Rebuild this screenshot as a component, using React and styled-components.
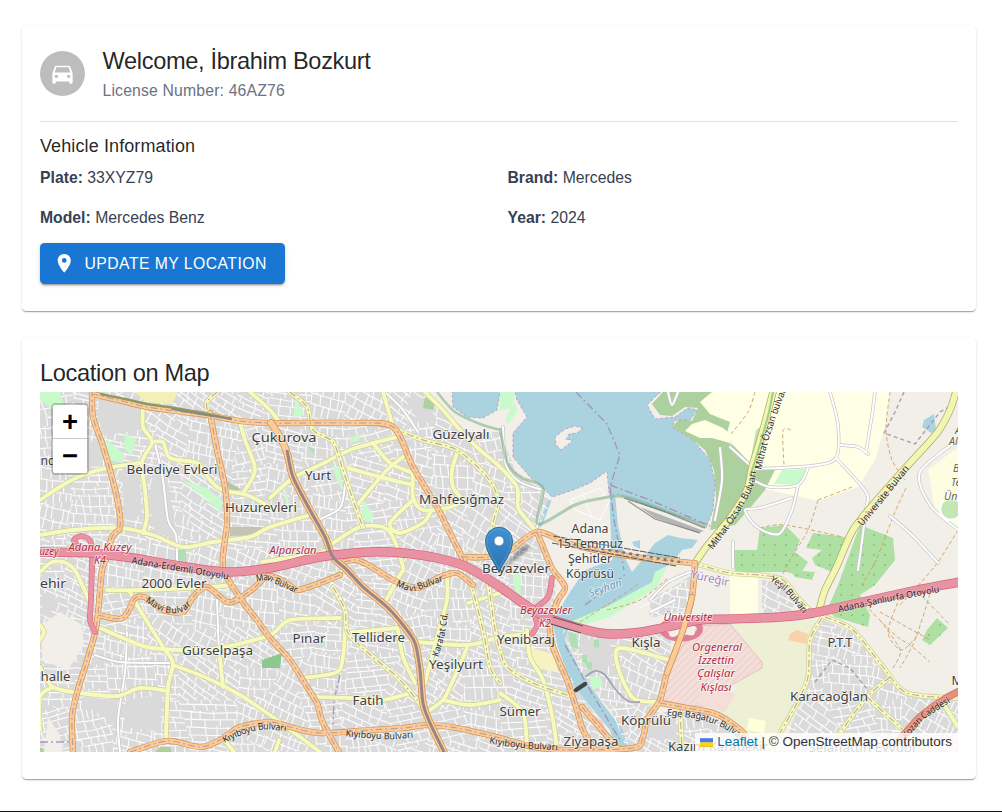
import React from "react";
import styled, { createGlobalStyle } from "styled-components";
import { MdDirectionsCar, MdLocationOn } from "react-icons/md";

const GlobalStyle = createGlobalStyle`
  * { box-sizing: border-box; }
  body {
    margin: 0;
    background: #fff;
    color: rgba(0, 0, 0, 0.87);
    font-family: "Liberation Sans", Arial, sans-serif;
  }
`;

const Page = styled.main`
  height: 812px;
  padding: 26px 26px 0 22px;
  border-bottom: 1px solid #141414;
  display: flex;
  flex-direction: column;
  gap: 27px;
`;

const Card = styled.section`
  width: 954px;
  padding: 18px 18px 27px;
  border-radius: 4.5px;
  background: #fff;
  box-shadow: 0 2px 1px -1px rgba(0, 0, 0, 0.2), 0 1px 1px 0 rgba(0, 0, 0, 0.14),
    0 1px 3px 0 rgba(0, 0, 0, 0.12);
`;

const Header = styled.header`
  display: flex;
  align-items: center;
  gap: 17.5px;
  padding-bottom: 18px;
  border-bottom: 1px solid rgba(0, 0, 0, 0.12);
`;

const Avatar = styled.div`
  width: 45px;
  height: 45px;
  border-radius: 50%;
  background: #bdbdbd;
  color: #fff;
  display: grid;
  place-items: center;
  font-size: 27px;
  line-height: 0;
`;

const Title = styled.h1`
  margin: 0;
  padding-bottom: 2px;
  font-size: 23.6px;
  line-height: 34px;
  font-weight: 400;
  letter-spacing: -0.34px;
  white-space: nowrap;
`;

const Muted = styled.p`
  margin: 0;
  font-size: 15.75px;
  line-height: 22.5px;
  letter-spacing: 0.01071em;
  color: #6b7280;
`;

const Subtitle = styled.h2`
  margin: 9px 0 4.5px;
  font-size: 18px;
  line-height: 31.5px;
  font-weight: 400;
  letter-spacing: 0.006em;
`;

const Details = styled.div`
  display: grid;
  grid-template-columns: 1fr 1fr;
  gap: 17.5px 17px;
  margin-bottom: 14px;
`;

const Detail = styled.p`
  margin: 0;
  font-size: 15.75px;
  line-height: 22.5px;
  color: #374151;
`;

const Button = styled.button`
  display: flex;
  align-items: center;
  height: 41px;
  width: 245px;
  padding: 0 12.5px;
  gap: 9.5px;
  border: 0;
  border-radius: 4.5px;
  background: #1976d2;
  color: #fff;
  font: 400 15.75px "Liberation Sans", Arial, sans-serif;
  letter-spacing: 0.02857em;
  text-transform: uppercase;
  white-space: nowrap;
  box-shadow: 0 3px 1px -2px rgba(0, 0, 0, 0.2), 0 2px 2px 0 rgba(0, 0, 0, 0.14),
    0 1px 5px 0 rgba(0, 0, 0, 0.12);
  svg { font-size: 22.5px; flex: none; }
`;

const MapTitle = styled(Title).attrs({ as: "h2" })``;

const MapFrame = styled.div`
  position: relative;
  height: 360px;
  overflow: hidden;
  background: #ddd;
`;

const MapSvg = styled.svg`
  display: block;
  width: 918px;
  height: 360px;
`;

const ZoomControl = styled.div`
  position: absolute;
  left: 11px;
  top: 11px;
  width: 38px;
  border: 2px solid rgba(0, 0, 0, 0.2);
  border-radius: 4.5px;
  background-clip: padding-box;
`;

const ZoomButton = styled.button`
  display: grid;
  place-items: center;
  width: 34px;
  height: 34px;
  padding: 0;
  border: 0;
  border-bottom: ${(p) => (p.$top ? "1px solid #ccc" : "0")};
  border-radius: ${(p) => (p.$top ? "2px 2px 0 0" : "0 0 2px 2px")};
  background: #fff;
  color: #000;
  font: bold 27.5px/34px "Liberation Sans", Arial, sans-serif;
`;

const Attribution = styled.div`
  position: absolute;
  right: 0;
  bottom: 0;
  display: flex;
  align-items: center;
  height: 19px;
  padding: 0 6px 2px 5px;
  background: rgba(255, 255, 255, 0.8);
  color: #333;
  font-size: 13.5px;
  white-space: pre;
  a { color: #0078a8; }
  svg { margin: 1px 4px 0 0; }
`;

/* ---------- map data ---------- */

const WEST =
  "40,392 423,392 445,412 468,432 500,432 515,470 552,500 537,530 556,585 553,620 560,660 585,700 610,735 614,752 40,752";
const RESIDENTIAL = [
  WEST,
  "562,630 600,637 672,632 668,680 655,712 700,712 735,730 735,752 628,752 612,712 585,680",
  "824,620 852,632 905,695 958,700 958,752 770,752 806,690 811,640",
  "650,600 692,575 688,610 650,618",
  "762,580 783,583 795,603 790,615 762,614",
];

const seeded = (seed) => () => {
  seed = (seed * 1664525 + 1013904223) % 4294967296;
  return seed / 4294967296;
};

// Small streets: a jittered lattice of blocks, each with its own street direction.
const buildStreets = () => {
  const rnd = seeded(77);
  const step = 40;
  const cols = 24;
  const rows = 10;
  const pts = [];
  for (let r = 0; r <= rows; r++) {
    pts.push([]);
    for (let c = 0; c <= cols; c++) {
      pts[r].push([30 + c * step + (rnd() - 0.5) * 24, 380 + r * step + (rnd() - 0.5) * 24]);
    }
  }
  const cells = [];
  for (let r = 0; r < rows; r++) {
    for (let c = 0; c < cols; c++) {
      const quad = [pts[r][c], pts[r][c + 1], pts[r + 1][c + 1], pts[r + 1][c]];
      const cx = 50 + c * step;
      const cy = 400 + r * step;
      const angle = rnd() * 0.9 - 0.25;
      const ux = Math.cos(angle);
      const uy = Math.sin(angle);
      const at = (a, b) => `${(cx + a * ux - b * uy).toFixed(1)},${(cy + a * uy + b * ux).toFixed(1)}`;
      const wide = rnd() > 0.5;
      let d = "";
      let b = -36;
      while (b < 36) {
        const gap = (wide ? 5 : 9) + rnd() * 4;
        d += `M${at(-36, b)}L${at(0, b + rnd() * 3)}L${at(36, b + rnd() * 2)}`;
        let a = -36 + rnd() * 6;
        while (a < 36) {
          d += `M${at(a, b)}L${at(a + rnd() * 2, b + gap)}`;
          a += (wide ? 9 : 4.5) + rnd() * 7;
        }
        b += gap;
      }
      cells.push({ id: `b${r}-${c}`, quad: quad.map((p) => p.map((n) => n.toFixed(1)).join(",")).join(" "), d });
    }
  }
  return cells;
};
const STREETS = buildStreets();

const smooth = (s) => {
  const p = s.trim().split(/\s+/).map((q) => q.split(",").map(Number));
  let d = `M${p[0]}`;
  for (let i = 0; i < p.length - 1; i++) {
    const a = p[i - 1] || p[i];
    const b = p[i];
    const c = p[i + 1];
    const e = p[i + 2] || c;
    d += `C${b[0] + (c[0] - a[0]) / 7},${b[1] + (c[1] - a[1]) / 7} ${c[0] - (e[0] - b[0]) / 7},${c[1] - (e[1] - b[1]) / 7} ${c[0]},${c[1]}`;
  }
  return d;
};

const YELLOW = [
  "40,500 63,485 83,475 107,468 140,463",
  "143,407 143,427 152,442 142,462 145,490 147,517 143,533",
  "152,442 163,442 170,458 197,463 210,480 222,490 247,495 270,507",
  "240,422 245,440 255,470 243,493",
  "40,535 73,530 120,528 153,535 183,547 213,542 250,537 270,527 310,515",
  "250,392 270,410 280,423",
  "40,572 52,562 66,563 76,572 90,603",
  "270,498 293,478 320,465 350,450 377,442 397,437",
  "383,392 392,423",
  "423,390 443,410 460,430 480,450 500,467 517,487 518,507 527,520 537,532",
  "457,453 452,470 453,487 463,500",
  "348,468 380,477 413,485",
  "373,443 390,463 413,473",
  "403,457 387,470 357,505",
  "413,470 413,497 423,510 447,508 460,503",
  "413,500 390,523 400,533 423,523 430,513",
  "262,562 320,553 333,543 360,527 383,527 393,537 403,567 400,575 385,602",
  "107,590 140,590 223,586 230,580",
  "130,592 140,610 163,647 173,663 168,687 166,737",
  "100,628 123,638 147,647 183,650 220,648 270,635 290,620 340,618",
  "173,665 207,678 240,695 270,715 300,737 320,752",
  "220,658 223,687",
  "40,667 53,687 80,693 117,696 140,688 168,691",
  "53,687 40,697 40,730",
  "40,625 44,632 40,640",
  "345,610 345,633 342,663 335,673 303,678",
  "345,633 397,628",
  "398,630 403,657 415,683",
  "313,697 350,698 383,700 410,693",
  "447,577 447,600 437,637 425,683",
  "417,642 467,645 500,637 527,634",
  "467,648 450,687 443,700 430,710",
  "443,700 470,705 500,700",
  "468,603 500,593",
  "527,630 530,657 543,680 553,720 557,752",
  "500,693 523,713 527,750",
  "670,660 620,648 618,667 633,698 657,702",
  "226,742 234,752",
  "943,703 958,727",
  "279,740 275,752",
];
const YELLOW_TRAM = [
  "290,392 307,407 313,430 333,442 342,467 353,500 363,527",
  "393,428 423,440 457,450 487,477 498,500 493,523 488,553",
  "333,587 345,610 348,633 373,657 397,677 417,700 425,713",
  "470,580 483,630 490,667 500,683",
  "488,580 495,630 500,650 507,667 533,683 573,697",
  "693,563 730,573 760,575 783,580 797,597 810,610",
  "822,618 810,640 808,677 797,703 780,733 772,752",
  "825,617 853,630 883,667 907,693 958,698",
  "890,677 867,697 840,733 828,752",
  "867,697 903,730 925,752",
  "680,707 682,752",
  "217,392 207,402 208,415",
];
const YELLOW_WIDE = [
  "697,560 707,546 730,518 747,490 752,467 763,430 773,392",
  "820,607 825,590 837,566 853,530 877,500 910,463 937,433 950,410 957,388",
];
const ORANGE = [
  "92,390 93,417 102,443 110,470 118,503 120,527 112,537 107,557 102,570 98,613 95,633 85,667 77,693 72,717 73,754",
  "92,394 118,400 147,407 183,412 207,415 240,421 270,423 303,423 353,423 393,427 413,467 437,507 450,533 462,557 467,567",
  "210,413 217,450 225,487 227,523 223,567 240,598 257,620 270,638 290,660 307,687 317,703 323,723 340,754",
  "98,615 120,619 128,612 135,598 147,598 163,610 183,612 193,597 207,587 227,602 240,598 255,587 268,576 285,582 297,590 320,583 340,575",
  "344,562 356,560 370,566 393,580 417,588 440,577 457,573 473,585",
  "130,752 167,741 200,747 220,740 240,727 270,722 290,727 320,733 370,730 403,728 427,725 457,728 500,738 533,747 567,750 633,748 643,737 647,720 660,700 667,673 682,633 692,597 695,563",
  "537,532 547,557 553,570 565,587 558,600 550,623 553,647 567,680 577,710 583,730 597,754",
  "582,707 600,728 617,747",
  "462,557 488,557 510,550 537,532 567,543 610,553 650,559 693,563",
  "660,703 687,708 713,713 730,722 745,735 747,752",
];
const TRUNK = "271,423 280,437 287,453 293,477 310,510 325,537 333,557 347,570 363,587 387,607 403,625 415,643 420,670 423,703 430,723 445,754";
const TRUNK_CORE = "287,450 293,477 310,510 325,537 333,557 347,570 363,587 387,607 403,625 415,643 420,670 423,703 430,723 445,754";
const MOTORWAY = "38,552 90,553 133,558 180,566 227,572 270,568 320,557 370,552 403,553 437,558 467,567 500,587 533,610 553,620 600,633 633,633 667,627 700,620 730,619 780,617 813,613 863,602 917,590 960,582";
const RAMPS = [
  "92,562 91,600 90,620 95,632",
  "78,546 74,540 82,536 91,543 92,570",
  "533,610 548,597 552,578",
  "533,610 537,625 532,634",
];
const PATHS = [
  "755,392 748,412 731,434", "791,430 783,431 784,465", "818,500 852,487",
  "818,500 808,530 790,560 780,580", "760,528 785,525 843,537",
  "906,488 895,512 876,560 862,585", "890,392 886,430 892,460 905,480",
  "958,530 935,566 900,605", "860,600 895,635 910,645 930,662", "880,620 900,650 893,668",
  "900,597 888,632 902,650 920,632", "930,594 915,640 900,668", "880,612 930,640", "918,592 950,625",
  "607,610 640,600 668,578", "580,622 610,603 640,583",
];
const WHITE_ROADS = [
  "830,392 838,425 836,458 810,466 753,469", "836,458 866,492 866,510 858,570", "875,392 872,415 866,452",
  "840,445 858,447 868,454", "753,480 770,487 798,485 808,468", "798,485 792,510 779,534 757,527 745,510 760,508 792,498",
  "730,447 752,467", "958,440 920,472 930,505 958,530", "890,516 912,535 938,563", "720,448 722,480 715,520",
  "503,427 506,465 520,482 543,490", "543,490 537,528", "668,392 672,405 678,392",
  "385,392 403,410 418,432", "127,632 125,672 118,720 120,752", "217,600 219,655", "155,443 163,480 168,520 176,535 177,560",
  "318,520 340,508 345,485", "95,655 120,662 170,663",
  "650,600 668,582 690,572", "650,612 675,600", "733,567 733,542",
];

const GREENS = [
  ["#c8facc", "40,392 60,392 64,405 50,408 40,400"], ["#c8facc", "104,438 124,454 122,463 110,460"],
  ["#c8facc", "125,433 136,440 132,456 124,448"], ["#c8facc", "182,480 206,488 222,500 221,513 208,500 195,490"],
  ["#c8facc", "296,398 304,415 293,417"], ["#c8facc", "332,466 340,468 343,492 337,480"],
  ["#c8facc", "364,500 374,517 368,523 361,517"], ["#aedfb5", "306,445 315,450 313,453"],
  ["#c8facc", "284,485 290,505 286,503"], ["#aedfb5", "178,550 186,550 186,562 178,560"],
  ["#8dc98f", "262,660 282,653 280,668 262,668"], ["#c8facc", "500,392 515,392 512,408 500,410"],
  ["#c8facc", "515,402 517,412 508,424 505,420"], ["#aedfb5", "568,632 576,634 579,649 571,647"],
  ["#aedfb5", "594,640 599,640 599,648 594,647"], ["#aedfb5", "582,655 587,655 587,664 582,662"],
  ["#aedfb5", "586,662 592,662 592,670 587,669"], ["#c8facc", "590,677 600,676 603,686 592,690"],
  ["#c8facc", "350,438 361,434 359,441 351,442"], ["#c8facc", "513,575 520,573 521,597 515,592"],
  ["#add19e", "425,397 435,404 433,410 423,408"], ["#add19e", "40,747 48,752 40,752"],
  ["#add19e", "160,747 170,747 172,752 155,752"], ["#f3efb9", "135,392 178,392 172,404 145,402"],
  ["#f2efe9", "42,625 60,612 82,625 84,645 68,670 42,660"],
  ["#f2efe9", "48,717 60,735 62,752 44,752"], ["#f5f3c0", "524,645 555,655 558,672 535,668"],
  ["#c5c4b4", "230,527 262,527 260,535 230,536"], ["#b4c5a5", "225,480 242,490 230,490"],
];
const LAKE = "452,390 453,407 467,417 483,418 497,410 500,392 515,392 517,400 527,417 513,433 513,457 530,477 543,488 552,497 573,490 590,483 607,471 609,493 620,495 650,507 707,525 713,510 715,483 710,460 693,440 672,427 675,420 690,420 697,410 688,408 675,417 655,419 647,405 655,397 663,390";
const RIVER = "609,490 615,494 618,525 625,558 632,572 642,560 655,543 668,535 680,538 698,540 692,548 682,550 672,563 655,572 652,582 610,605 570,622 565,640 580,670 600,700 623,730 629,752 617,752 610,730 585,700 570,680 557,645 553,620 570,592 585,570 612,560";
const FOREST =
  "663,392 712,392 700,402 710,414 730,422 725,440 735,447 752,465 775,470 765,490 750,508 735,525 710,530 716,500 714,470 705,450 693,440 672,427 680,418 692,421 698,408 685,407 672,416 660,415 652,404";
const ORCHARDS = [
  "760,528 785,525 800,540 795,552 808,562 800,575 785,572 735,572 733,550 757,550",
  "813,533 845,537 842,550 832,572 815,565 812,558 822,550 806,548",
  "860,525 893,538 895,560 875,585 860,595 870,615 868,627 835,617 827,610 838,585",
  "937,618 948,628 930,645 922,640 927,630",
  "790,570 815,572 812,580 795,577",
];

/* [text, x (middle), y (middle), width] */
const PLACES = [
  ["Çukurova", 284, 438, 65], ["Güzelyalı", 461, 435, 57], ["Belediye Evleri", 172, 470, 91],
  ["Yurt", 318, 475.5, 26], ["Huzurevleri", 261, 508, 72], ["Mahfesığmaz", 461.5, 499.5, 85],
  ["Adana", 590, 529, 37], ["15 Temmuz", 590, 544, 66], ["Şehitler", 590, 559, 44], ["Köprüsü", 590, 574, 48],
  ["Beyazevler", 516, 569, 68], ["2000 Evler", 174, 584, 65], ["Pınar", 309, 639, 33],
  ["Tellidere", 378.5, 638, 53], ["Gürselpaşa", 217.5, 651, 71], ["Yeşilyurt", 456, 664.5, 54],
  ["Yenibaraj", 526, 640, 58], ["Kışla", 646, 643, 29], ["P.T.T", 840, 643, 25],
  ["Fatih", 368, 700.5, 31], ["Sümer", 520, 711.5, 41], ["Köprülü", 646, 721, 50],
  ["Karacaoğlan", 829, 696.5, 78], ["Ziyapaşa", 591, 741.5, 55], ["Kazım Karabekir", 718, 747, 100],
  ["Selahattin Eyyubi", 862, 748, 107],
  ["nda", 51.5, 461, 22], ["ehir", 53, 584, 26], ["halle", 55.5, 677, 30], ["Mu", 961, 681, 19],
];
/* [text, x (middle), y (middle), width] */
const RED = [
  ["Adana Kuzey", 100, 547, 63], ["uzey", 49, 551, 19], ["K4", 100, 560, 12], ["Alparslan", 293, 550, 47],
  ["Beyazevler", 546, 610, 52], ["K2", 545, 623, 12], ["Üniversite", 688, 617, 49],
  ["Orgeneral", 717, 647, 50], ["İzzettin", 716, 660, 36], ["Çalışlar", 716, 673.5, 38], ["Kışlası", 716, 687, 31],
];
/* [text, x (start), y (middle)] */
const OLIVE = [["A", 955, 430], ["Al", 949, 441], ["B", 953, 468], ["Te", 951, 482], ["Ün", 944, 496]];

/* [text, path, font size, text length] */
const ROAD_LABELS = [
  ["Adana-Erdemli Otoyolu", "132,560 180,568 234,577", 9.3, 98],
  ["Adana-Şanlıurfa Otoyolu", "838,609 880,600 942,588", 9.3, 103],
  ["Mavi Bulvar", "147,599 165,609 180,609 192,600", 9.3, 47],
  ["Mavi Bulvar", "256,578 268,577 282,583 299,591", 9.3, 44],
  ["Mavi Bulvar", "397,583 412,588 424,584 445,577", 9.3, 48],
  ["Kıyıboyu Bulvarı", "223,740 240,732 262,726 288,728", 9.3, 66],
  ["Kıyıboyu Bulvarı", "346,733 370,735 390,736 414,734", 9.3, 67],
  ["Kıyıboyu Bulvarı", "490,740 515,744 559,747", 9.3, 68],
  ["Karafat Cd.", "435,656 441,635 445,610", 9.3, 44],
  ["Mithat Özsan Bulvarı", "710,548 731,519 749,488 753,469", 9.6, 89],
  ["Mithat Özsan bulvarı", "758,469 765,440 775,410 784,386", 9.6, 86],
  ["Üniversite Bulvarı", "860,524 880,500 908,465", 9.6, 74],
  ["Yeşil Bulvarı", "772,578 788,590 806,612", 9.3, 48],
  ["Ege Bağatur Bulvarı", "667,712 700,716 725,725 748,741", 9.3, 84],
  ["Kozan Caddesi", "904,737 923,716 951,698", 9.6, 59],
];

const Road = ({ list, fill, casing, width, tram }) => (
  <g fill="none" strokeLinecap="round" strokeLinejoin="round">
    {list.map((s, i) => <path key={`c${i}`} d={smooth(s)} stroke={casing} strokeWidth={width + 1.4} />)}
    {list.map((s, i) => <path key={`f${i}`} d={smooth(s)} stroke={fill} strokeWidth={width} />)}
    {tram && list.map((s, i) => (
      <path key={`t${i}`} d={smooth(s)} stroke="#ad8a9c" strokeOpacity="0.75" strokeWidth="1.1" strokeDasharray="7 3 2 3" strokeLinecap="butt" />
    ))}
  </g>
);

const MapLabel = styled.text`
  font-family: "Noto Sans", sans-serif;
  font-size: ${(p) => p.$size || 12.6}px;
  font-style: ${(p) => (p.$italic ? "italic" : "normal")};
  fill: ${(p) => p.$color || "#3f3f3f"};
  stroke: rgba(255, 255, 255, ${(p) => p.$halo ?? 0.6});
  stroke-width: 1.8px;
  stroke-linejoin: round;
  paint-order: stroke;
`;

const CityMap = () => (
  <MapSvg viewBox="40 392 918 360" aria-label="Map">
    <defs>
      <clipPath id="residential">{RESIDENTIAL.map((p, i) => <polygon key={i} points={p} />)}</clipPath>
      {STREETS.map((s) => <clipPath key={s.id} id={s.id}><polygon points={s.quad} /></clipPath>)}
      <pattern id="trees" width="11" height="10" patternUnits="userSpaceOnUse">
        <rect width="11" height="10" fill="#aedfa3" /><circle cx="5" cy="5" r="0.8" fill="#6fae68" />
      </pattern>
      <pattern id="hatch" width="5" height="5" patternUnits="userSpaceOnUse" patternTransform="rotate(45)">
        <rect width="5" height="5" fill="#f2dfda" /><rect width="1" height="5" fill="#f1ccc8" />
      </pattern>
      <linearGradient id="pin" x1="0" y1="0" x2="0" y2="1">
        <stop offset="0" stopColor="#3f93d3" /><stop offset="1" stopColor="#2a70b0" />
      </linearGradient>
      <filter id="soft"><feGaussianBlur stdDeviation="1.6" /></filter>
      {ROAD_LABELS.map((l, i) => <path key={i} id={`road${i}`} d={smooth(l[1])} />)}
    </defs>

    <rect x="40" y="392" width="918" height="360" fill="#f2efe9" />
    {RESIDENTIAL.map((p, i) => <polygon key={i} points={p} fill="#dadada" />)}
    <polygon points="700,392 890,392 885,428 875,460 858,487 818,501 765,489 745,492 735,447 725,430 710,414 695,404" fill="#ffffe5" />
    <polygon points="928,470 958,447 958,535 935,510" fill="#fdfde2" />
    <polygon points="730,576 758,577 758,614 730,615" fill="#ffffe5" />
    <polygon points="730,623 818,620 808,640 806,690 780,752 745,752 742,728 725,716 700,710 735,690" fill="#edf0d5" />
    <polygon points="687,637 700,626 730,624 762,662 762,668 730,686 718,706 690,706 662,700 670,670" fill="url(#hatch)" stroke="#eeb5b5" strokeWidth="0.8" />
    <polygon points="697,704 700,692 725,687 735,695 725,712" fill="#f5ddd8" />
    <polygon points="790,634 797,630 808,634 806,644 788,640" fill="#fad1a8" />
    <polygon points="749,718 766,721 764,733 747,730" fill="#ffffd8" />
    <polygon points={FOREST} fill="#add19e" />
    <polygon points="712,392 727,392 735,400 742,415 732,436 723,428 705,420 692,424 685,431 700,438 712,438 730,443 735,424" fill="#ffffe5" />
    <polygon points="782,470 808,469 799,485 774,484" fill="#c8facc" />
    {ORCHARDS.map((p) => <polygon key={p} points={p} fill="url(#trees)" />)}
    <polygon points="756,430 763,425 766,440 758,458 751,458" fill="#add19e" opacity="0.7" />
    <polygon points="667,566 657,587 610,617 577,627 560,622 593,603 633,587 650,570 680,560 698,562" fill="#c8facc" />
    <g stroke="#b79fc0" strokeWidth="0.9" strokeDasharray="3 2" fill="#aad3df">
      <polygon points={LAKE} />
      <polygon points="583,428 575,426 565,429 555,437 556,445 561,450 570,443 573,439 566,440 569,434 577,433" fill="#f2efe9" />
    </g>
    <polygon points={RIVER} fill="#aad3df" />
    <g fill="#aad3df">
      <polygon points="548,500 552,499 542,526 538,528" />
      <polygon points="632,542 640,540 640,549 634,546" />
      <polygon points="924,420 934,414 936,430 931,433 922,427" />
    </g>
    <polygon points="640,507 704,531 698,533 655,518" fill="#b5b5b5" />

    <g clipPath="url(#residential)">
      {STREETS.map((s) => (
        <g key={s.id} clipPath={`url(#${s.id})`}>
          <path d={s.d} fill="none" stroke="#fff" strokeWidth="1.15" strokeOpacity="0.9" />
        </g>
      ))}
    </g>
    <path
      d="M570,500L600,488L610,500L600,520L575,510L570,500M575,505L605,495M582,492L592,518M640,608L680,585"
      fill="none" stroke="#fff" strokeWidth="0.9"
    />
    {/* Areas without small streets inside the residential blocks */}
    <g fill="#dadada">
      <polygon points="100,392 140,408 140,430 125,432 104,436 97,415" />
      <polygon points="122,470 139,468 142,515 124,520" />
      <polygon points="153,470 166,470 178,540 155,532 149,500" />
      <polygon points="82,697 118,700 115,725 82,703" />
      <polygon points="126,700 162,695 161,732 124,727" />
      <polygon points="404,397 424,398 437,420 420,424" />
      <polygon points="60,445 98,440 103,462 72,476" />
      <polygon points="578,640 610,638 612,665 590,672" />
      <polygon points="646,722 676,718 676,740 648,738" />
      <polygon points="42,592 60,600 48,617 42,615" />
    </g>
    {GREENS.map(([fill, p]) => <polygon key={p} points={p} fill={fill} />)}
    <polygon points="590,713 603,722 605,730 594,725" fill="#ffc0cb" />

    <g fill="none" stroke="#c99a5b" strokeWidth="1" strokeDasharray="4 2.5" opacity="0.85">
      {PATHS.map((s) => <path key={s} d={smooth(s)} />)}
    </g>
    <Road list={WHITE_ROADS} fill="#fff" casing="#c9c6c8" width={2} />
    <circle cx="951" cy="509" r="11" fill="#c3e6b5" stroke="#fff" strokeWidth="2.5" />

    <g fill="none" stroke="#a58ab3" strokeWidth="1.4" strokeDasharray="8 3 2 3" opacity="0.85">
      <path d="M576,392L607,424L620,455L610,487L614,520L624,570" />
      <path d="M610,485L650,500L710,526" />
      <path d="M585,605L625,575M565,645L590,690L620,740" />
      <path d="M904,392L895,412L884,433L915,444L940,412L958,402" strokeDasharray="4 3" />
      <path d="M815,682L832,660L850,668L868,690" strokeDasharray="4 3" />
      <path d="M340,675L334,700L333,725M40,742L70,742" />
    </g>
    <g fill="none" stroke="#83b28a" opacity="0.6">
      <path d={smooth("500,428 507,462 520,477 543,488 538,524 575,505 603,498 630,498 707,527")} strokeWidth="3" />
      <path d={smooth("624,498 660,510 705,528")} stroke="#3f4a42" strokeWidth="1.6" opacity="0.8" />
      <path d="M628,501L655,519L700,533" stroke="#555" strokeWidth="1.2" />
      <path d={smooth("437,392 455,412 480,424 500,430")} strokeWidth="2.5" />
    </g>

    <Road list={YELLOW} fill="#f7fabf" casing="#cdd09b" width={3.9} />
    <Road list={YELLOW_TRAM} fill="#f7fabf" casing="#cdd09b" width={3.9} tram />
    <Road list={YELLOW_WIDE} fill="#f3f6b2" casing="#a7ab63" width={6} />
    <path d={smooth("750,476 756,458 768,416 773,392")} fill="none" stroke="#75bd72" strokeWidth="2" opacity="0.7" />
    <Road list={["900,740 920,717 943,700 960,691"]} fill="#e98f7c" casing="#c96c55" width={6} />
    <Road list={ORANGE} fill="#fbcb98" casing="#cf9353" width={4.8} tram />
    <Road list={[TRUNK]} fill="#fbcb98" casing="#cf9353" width={6} />
    <path d={smooth("100,394 125,399 147,404 175,408 232,419")} fill="none" stroke="#8c9a5f" strokeWidth="2.4" />
    <path d={smooth("172,409 200,414 232,419")} fill="none" stroke="#888" strokeWidth="2" />
    <Road list={RAMPS} fill="#e892a2" casing="#dd7088" width={4.4} />
    <ellipse cx="681" cy="629" rx="19" ry="9.5" fill="none" stroke="#e27f94" strokeWidth="6" />
    <Road list={[MOTORWAY]} fill="#e892a2" casing="#d9627e" width={8} />
    <ellipse cx="673" cy="634" rx="4" ry="3" fill="#f2efe9" />
    <ellipse cx="691" cy="632" rx="4" ry="3.5" fill="#f2efe9" />
    <Road list={["667,673 682,633 692,597"]} fill="#fbcb98" casing="#cf9353" width={4.8} />
    <path d="M553,617L583,626M551,624L581,633" stroke="#555" strokeWidth="1" />
    <path d="M553,536L680,558M552,543L676,566" stroke="#555" strokeWidth="1" strokeDasharray="7 1" />
    <path d="M567,543L680,562" stroke="#777" strokeWidth="2.4" strokeDasharray="3 4" />
    <path d={smooth(TRUNK_CORE)} fill="none" stroke="#998583" strokeWidth="3" />
    <path d={smooth("585,677 595,671 605,675 616,690 628,701 640,702")} fill="none" stroke="#a4a4b8" strokeWidth="1.8" />
    <path d="M576,690L585,684" stroke="#444" strokeWidth="4.5" strokeLinecap="round" />

    {ROAD_LABELS.map(([text, , size, len], i) => (
      <MapLabel key={i} $size={size} $color="#2b2b2b" $halo={0.25} dy="3.4">
        <textPath href={`#road${i}`} textLength={len} lengthAdjust="spacingAndGlyphs">{text}</textPath>
      </MapLabel>
    ))}
    {RED.map(([text, x, y, w]) => (
      <MapLabel key={text + y} $size={10.6} $italic $color="#b02e45" x={x - w / 2} y={y + 3.8} textLength={w} lengthAdjust="spacingAndGlyphs">{text}</MapLabel>
    ))}
    {OLIVE.map(([text, x, y]) => (
      <MapLabel key={text} $size={10.6} $italic $color="#68683b" x={x} y={y + 3.5}>{text}</MapLabel>
    ))}
    <MapLabel $size={10.8} $italic $color="#6f9bbd" transform="translate(590 597) rotate(-19)">Seyhan</MapLabel>
    <MapLabel $size={11.5} $color="#9f83ad" transform="translate(690 578) rotate(12)">Yüreğir</MapLabel>
    {PLACES.map(([text, x, y, w]) => (
      <MapLabel key={text + y} x={x - w / 2} y={y + 4} textLength={w} lengthAdjust="spacingAndGlyphs">{text}</MapLabel>
    ))}

    <path d="M499,572L520,548Q532,540 528,550Z" fill="#000" opacity="0.35" filter="url(#soft)" />
    <path d="M499,572.5C496,564 485.5,553 485.5,541A13.5,13.7 0 0 1 512.5,541C512.5,553 502,564 499,572.5Z" fill="url(#pin)" stroke="#2e6c9e" strokeWidth="1" />
    <path d="M499,569C496,561 486.8,552 486.8,541A12.2,12.4 0 0 1 511.2,541C511.2,552 502,561 499,569Z" fill="none" stroke="#6aaee0" strokeWidth="1" opacity="0.5" />
    <circle cx="499" cy="541" r="4.9" fill="#fff" stroke="#2e6c9e" strokeWidth="0.6" />
  </MapSvg>
);

const Flag = () => (
  <svg width="13" height="9" viewBox="0 0 12 8">
    <path fill="#4C7BE1" d="M0 0h12v4H0z" />
    <path fill="#FFD500" d="M0 4h12v3H0z" />
    <path fill="#E0BC00" d="M0 7h12v1H0z" />
  </svg>
);

export default function App() {
  return (
    <>
      <GlobalStyle />
      <Page>
        <Card>
          <Header>
            <Avatar><MdDirectionsCar /></Avatar>
            <div>
              <Title>Welcome, İbrahim Bozkurt</Title>
              <Muted>License Number: 46AZ76</Muted>
            </div>
          </Header>
          <Subtitle>Vehicle Information</Subtitle>
          <Details>
            <Detail><strong>Plate:</strong> 33XYZ79</Detail>
            <Detail><strong>Brand:</strong> Mercedes</Detail>
            <Detail><strong>Model:</strong> Mercedes Benz</Detail>
            <Detail><strong>Year:</strong> 2024</Detail>
          </Details>
          <Button><MdLocationOn />Update My Location</Button>
        </Card>
        <Card>
          <MapTitle>Location on Map</MapTitle>
          <MapFrame>
            <CityMap />
            <ZoomControl>
              <ZoomButton $top aria-label="Zoom in">+</ZoomButton>
              <ZoomButton aria-label="Zoom out">−</ZoomButton>
            </ZoomControl>
            <Attribution><Flag /><a>Leaflet</a> | © OpenStreetMap contributors</Attribution>
          </MapFrame>
        </Card>
      </Page>
    </>
  );
}
